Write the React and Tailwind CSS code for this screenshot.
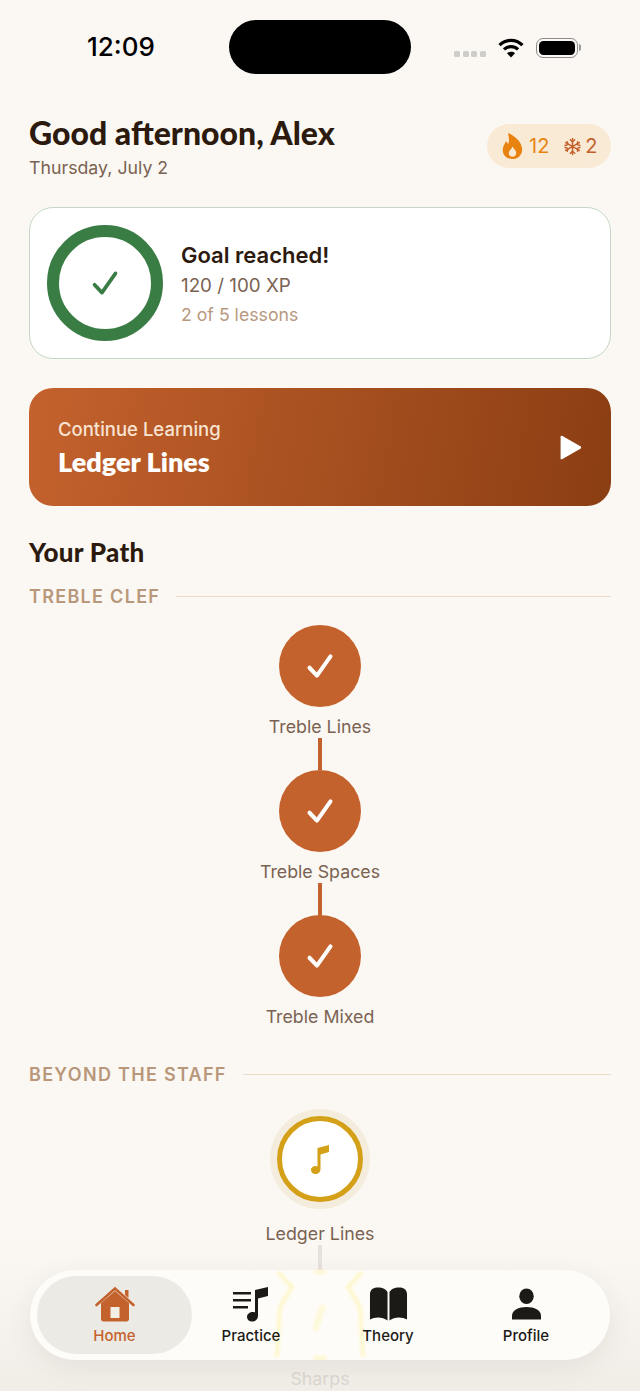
import React from 'react';

const Check = ({ className, width = 3 }) => (
    <svg viewBox="0 0 32 32" className={className} fill="none" stroke="currentColor" strokeWidth={width} strokeLinecap="round" strokeLinejoin="round">
        <path d="M4 18 L12.5 27 L28 5" />
    </svg>
);

const Note = ({ className }) => (
    <svg viewBox="0 0 18 29" className={className} fill="currentColor">
        <path d="M6.5 3 L18 0 V7 L9.5 9.5 V24 C9.5 27 7 29 4.5 29 C2 29 0 27.5 0 25 C0 22.5 2.5 21 4.5 21 C5.3 21 6 21.2 6.5 21.5 Z" />
    </svg>
);

const Flame = ({ className }) => (
    <svg viewBox="0 0 22 28" className={className}>
        <path fill="#e8830f" d="M6 0 C11 2 17 6 20 12 C22.5 17 21.5 22 18.5 25 C16 27.4 13 28 11 28 C5 28 0.5 24 0.5 18.5 C0.5 14 3 11.5 4 9 C5 10 5.5 11 6.5 12 C7.5 8.5 7.5 4 6 0 Z" />
        <path fill="#f9ead6" d="M11 14.5 C12 17 15 18.5 15 21.5 C15 24 13.2 25.5 11 25.5 C8.8 25.5 7 24 7 21.8 C7 19 10 17.5 11 14.5 Z" />
    </svg>
);

const Snowflake = ({ className }) => (
    <svg viewBox="0 0 24 24" className={className} fill="none" stroke="currentColor" strokeWidth="1.9" strokeLinecap="round" strokeLinejoin="round">
        <path d="M12 2 V22 M3.3 7 L20.7 17 M20.7 7 L3.3 17" />
        <path d="M9.2 3.4 L12 6 L14.8 3.4 M9.2 20.6 L12 18 L14.8 20.6 M2.6 10.8 L6.2 9.6 L5.4 5.9 M21.4 13.2 L17.8 14.4 L18.6 18.1 M21.4 10.8 L17.8 9.6 L18.6 5.9 M2.6 13.2 L6.2 14.4 L5.4 18.1" />
    </svg>
);

const StatusBar = () => (
    <div className="flex h-[94px] items-start">
        <div className="mt-[29px] w-[229px] pl-[87px] text-[26px] leading-[36px] font-medium text-black">12:09</div>
        <div className="mt-[20px] h-[54px] w-[182px] rounded-[27px] bg-black" />
        <div className="mt-[37px] ml-[43px] flex items-center">
            <div className="mt-[12px] flex gap-[2.5px]">
                <span className="h-[6px] w-[6px] rounded-[1.5px] bg-[#cfcdc9]" />
                <span className="h-[6px] w-[6px] rounded-[1.5px] bg-[#cfcdc9]" />
                <span className="h-[6px] w-[6px] rounded-[1.5px] bg-[#cfcdc9]" />
                <span className="h-[6px] w-[6px] rounded-[1.5px] bg-[#cfcdc9]" />
            </div>
            <svg viewBox="0 0 28 22" className="ml-[11px] h-[21px] w-[28px]" fill="none" stroke="#000" strokeWidth="3.4">
                <path d="M2 8.5 C9 1.8 19 1.8 26 8.5" />
                <path d="M6.6 13 C11 9 17 9 21.4 13" />
                <path d="M14 21.5 L9.8 17 C12 15 16 15 18.2 17 Z" fill="#000" stroke="none" />
            </svg>
            <div className="ml-[11px] flex items-center">
                <div className="flex h-[20px] w-[42px] items-center justify-center rounded-[7px] border-[1.5px] border-[#8b8b8b] p-[2px]">
                    <div className="h-full w-full rounded-[4.5px] bg-black" />
                </div>
                <div className="ml-[1px] h-[7px] w-[2px] rounded-r-[2px] bg-[#9a9a9a]" />
            </div>
        </div>
    </div>
);

const Header = () => (
    <div className="mt-[19px] flex items-start justify-between">
        <div>
            <h1 className="font-['Lato'] text-[32px] leading-[40px] font-black text-[#2c1a0e]">Good afternoon, Alex</h1>
            <p className="mt-[3px] text-[17.75px] leading-[24px] text-[#7a6252]">Thursday, July 2</p>
        </div>
        <div className="mt-[11px] flex h-[44px] w-[124px] items-center rounded-[22px] bg-[#f9ead6] pl-[15px]">
            <Flame className="h-[26px] w-[21px]" />
            <span className="ml-[6px] text-[20px] text-[#e8830f]">12</span>
            <Snowflake className="ml-[14px] h-[19px] w-[19px] text-[#c4622d]" />
            <span className="ml-[3px] text-[20px] text-[#c4622d]">2</span>
        </div>
    </div>
);

const GoalCard = () => (
    <div className="mt-[27px] flex h-[152px] items-center rounded-[24px] border border-[#c5d8c5] bg-white pl-[17px]">
        <div className="flex h-[116px] w-[116px] items-center justify-center rounded-full border-[12px] border-[#3a7d44]">
            <Check className="h-[28px] w-[28px] text-[#3a7d44]" width={4.2} />
        </div>
        <div className="ml-[18px] pt-[2px]">
            <div className="text-[22px] leading-[30px] font-semibold text-[#2c1a0e]">Goal reached!</div>
            <div className="mt-[1px] text-[18.8px] leading-[30px] text-[#7a6252]">120 / 100 XP</div>
            <div className="text-[17.7px] leading-[28px] text-[#b8997f]">2 of 5 lessons</div>
        </div>
    </div>
);

const ContinueCard = () => (
    <div className="mt-[29px] flex h-[118px] items-center justify-between rounded-[24px] bg-[linear-gradient(100deg,#c4622d,#8b3e13)] pr-[29px] pl-[29px]">
        <div>
            <div className="text-[18.5px] leading-[26px] font-medium text-[#f9e3d2]">Continue Learning</div>
            <div className="mt-[3px] font-['Lato'] text-[27px] leading-[34px] font-extrabold text-white">Ledger Lines</div>
        </div>
        <svg viewBox="2 0 20 24" className="h-[25px] w-[22px]" fill="#fff">
            <path d="M2 1.5 C2 .8 2.8 .4 3.4 .8 L21 10.8 C22 11.4 22 12.6 21 13.2 L3.4 23.2 C2.8 23.6 2 23.2 2 22.5 Z" />
        </svg>
    </div>
);

const SectionTitle = ({ title }) => (
    <div className="flex h-[24px] items-center gap-[16px]">
        <span className="text-[18px] font-semibold tracking-[1.3px] text-[#b8977a]">{title}</span>
        <div className="h-px flex-1 bg-[#eadcc6]" />
    </div>
);

const DoneNode = ({ label, link = true }) => (
    <div className="flex flex-col items-center">
        <div className="flex h-[82px] w-[82px] items-center justify-center rounded-full bg-[#c4622d]">
            <Check className="h-[28px] w-[28px] text-white" width={4.6} />
        </div>
        <div className="mt-[8px] text-[17.8px] leading-[24px] text-[#7a6252]">{label}</div>
        {link && <div className="-mt-px h-[32px] w-[4px] bg-[#c4622d]" />}
    </div>
);

const CurrentNode = () => (
    <div className="flex flex-col items-center">
        <div className="flex h-[100px] w-[100px] items-center justify-center rounded-full bg-[#f4ecdd]">
            <div className="flex h-[86px] w-[86px] items-center justify-center rounded-full border-[5px] border-[#d4a017] bg-white">
                <Note className="h-[29px] w-[18px] text-[#d4a017]" />
            </div>
        </div>
        <div className="mt-[13px] text-[17.8px] leading-[24px] text-[#7a6252]">Ledger Lines</div>
        <div className="-mt-px h-[32px] w-[4px] bg-[#e6e0d9]" />
        <div className="h-[82px] w-[82px]" />
        <div className="relative z-10 mt-[8px] text-[17.8px] leading-[24px] text-[#dcd8d2]">Sharps</div>
    </div>
);

const NavItem = ({ label, active, children, className }) => (
    <div className={`flex flex-col items-center justify-center ${className}`}>
        <div className="flex h-[38px] items-center justify-center">{children}</div>
        <span className={`mt-[3px] text-[15px] leading-[20px] font-medium ${active ? 'text-[#c4622d]' : 'text-[#1c1a17]'}`}>{label}</span>
    </div>
);

const BottomNav = () => (
    <>
        {/* soft fade under the bar */}
        <div className="pointer-events-none absolute inset-x-0 bottom-0 h-[150px] bg-gradient-to-b from-[#fbf8f300] to-[#f1eee8]" />
        <div className="absolute top-[1270px] left-[30px] z-20 h-[90px] w-[580px] overflow-hidden rounded-[45px] bg-[#fefcf8] shadow-[0_8px_28px_rgba(60,40,20,0.08)]">
            {/* the node behind the glass */}
            <svg viewBox="0 0 90 90" className="absolute top-0 left-[245px] h-[90px] w-[90px] blur-[1.5px]" fill="none" stroke="#fdf6c6" strokeWidth="3.5">
                <path d="M3 2 L17 17 L5 37 L2 87" />
                <path d="M87 2 L73 17 L85 37 L88 87" />
                <path d="M39 2 H51" />
                <path d="M39 88 H51" />
                <path d="M48 35 L40 60" strokeWidth="6" stroke="#fdf8d8" />
            </svg>
            <div className="relative flex h-full items-center px-[7px]">
                <NavItem label="Home" active className="h-[78px] w-[155px] rounded-[39px] bg-[#eceae4]">
                    <svg viewBox="0 0 40 36" className="h-[36px] w-[40px]">
                        <path fill="#c4622d" d="M6 17 L20 5 L34 17 V33 C34 34.6 33 35.5 31.5 35.5 H8.5 C7 35.5 6 34.6 6 33 Z" />
                        <path fill="#f4efe6" d="M15.5 21 H24.5 V32 H15.5 Z" />
                        <path fill="none" stroke="#c4622d" strokeWidth="2.6" strokeLinecap="round" d="M1.5 19 L20 2.5 L38.5 19" />
                        <path fill="#c4622d" d="M30 4 H33.5 V12 L30 9 Z" />
                    </svg>
                </NavItem>
                <NavItem label="Practice" className="w-[118px]">
                    <svg viewBox="0 0 36 36" className="h-[36px] w-[36px]" fill="#1c1a17">
                        <rect x="0" y="6" width="18" height="2.5" />
                        <rect x="0" y="13" width="18" height="2.5" />
                        <rect x="0" y="20" width="15" height="2.5" />
                        <path d="M22 4 L35 1 V10 L25 12.5 V30 C25 33 22.5 35.5 19 35.5 C16 35.5 14 33.5 14 31 C14 28 16.8 26 20 26 C20.8 26 21.4 26.1 22 26.4 Z" />
                    </svg>
                </NavItem>
                <NavItem label="Theory" className="ml-[19px] w-[118px]">
                    <svg viewBox="0 0 40 36" className="h-[36px] w-[39px]" fill="#1c1a17">
                        <path d="M19 6 C18 3 14 1 9 1 C4 1 1 3.5 1 8 V34 C6 31 14 31 19 35 Z" />
                        <path d="M21 6 C22 3 26 1 31 1 C36 1 39 3.5 39 8 V34 C34 31 26 31 21 35 Z" />
                    </svg>
                </NavItem>
                <NavItem label="Profile" className="ml-[20px] w-[118px]">
                    <svg viewBox="0 0 30 32" className="h-[32px] w-[29px]" fill="#1c1a17">
                        <ellipse cx="15" cy="8" rx="7.5" ry="8" />
                        <path d="M0 32 V28 C0 22 7 19 15 19 C23 19 30 22 30 28 V32 Z" />
                    </svg>
                </NavItem>
            </div>
        </div>
    </>
);

export default function App() {
    return (
        <div className="relative h-[1391px] w-full overflow-hidden bg-[#fbf8f3] font-['Inter',sans-serif]">
            <StatusBar />
            <div className="px-[29px]">
                <Header />
                <GoalCard />
                <ContinueCard />

                {/* Path */}
                <h2 className="mt-[29px] font-['Lato'] text-[26px] leading-[34px] font-black tracking-[0.3px] text-[#2c1a0e]">Your Path</h2>
                <div className="mt-[15px]">
                    <SectionTitle title="TREBLE CLEF" />
                </div>
                <div className="mt-[17px]">
                    <DoneNode label="Treble Lines" />
                    <DoneNode label="Treble Spaces" />
                    <DoneNode label="Treble Mixed" link={false} />
                </div>
                <div className="mt-[33px]">
                    <SectionTitle title="BEYOND THE STAFF" />
                </div>
                <div className="mt-[23px]">
                    <CurrentNode />
                </div>
            </div>
            <BottomNav />
        </div>
    );
}
